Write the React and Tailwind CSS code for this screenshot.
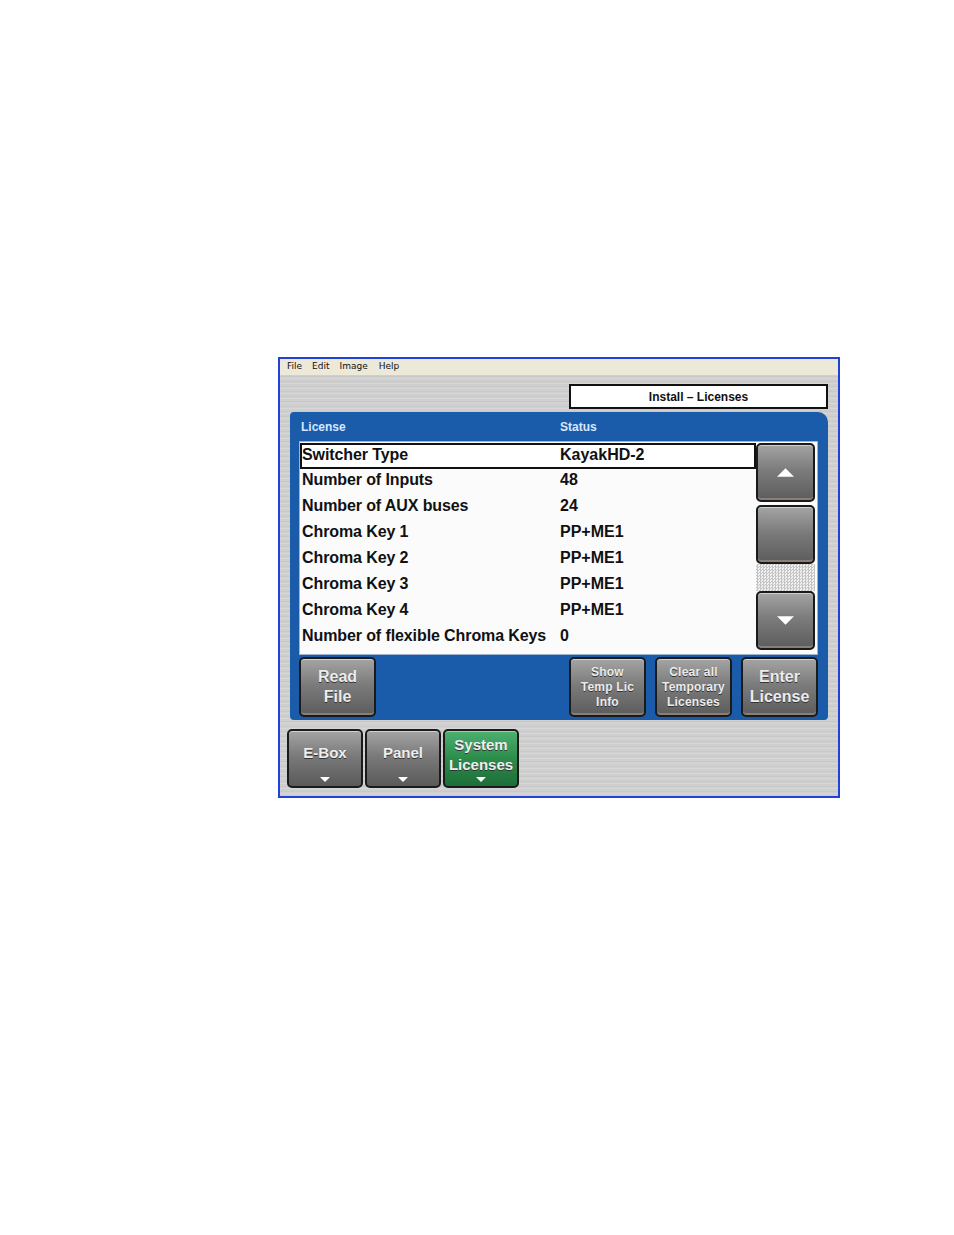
import React from "react";

const rows = [
  ["Switcher Type", "KayakHD-2"],
  ["Number of Inputs", "48"],
  ["Number of AUX buses", "24"],
  ["Chroma Key 1", "PP+ME1"],
  ["Chroma Key 2", "PP+ME1"],
  ["Chroma Key 3", "PP+ME1"],
  ["Chroma Key 4", "PP+ME1"],
  ["Number of flexible Chroma Keys", "0"],
];

const Tri = ({ down, className }) => (
  <svg viewBox="0 0 20 10" className={className}>
    <polygon points={down ? "0,0 20,0 10,10" : "10,0 20,10 0,10"} fill="#ffffff" />
  </svg>
);

const grayBtn =
  "rounded-[5px] border-2 border-[#1a1a1a] bg-[linear-gradient(180deg,#a4a4a4_0%,#7c7c7c_45%,#5c5c5c_100%)] shadow-[inset_0_1px_0_#d0d0d0,inset_0_-2px_0_#8a7f78]";

const PanelButton = ({ lines, small }) => (
  <div
    className={`${grayBtn} w-[77px] h-[60px] flex flex-col items-center justify-center text-[#ececec] font-bold [text-shadow:0_1px_0_#333] ${
      small ? "text-[12px] leading-[15px] tracking-[0.2px]" : "text-[16px] leading-[20px]"
    }`}
  >
    {lines.map((l) => (
      <span key={l} className="whitespace-nowrap">{l}</span>
    ))}
  </div>
);

const Tab = ({ lines, green }) => (
  <div
    className={`w-[76px] h-[59px] rounded-[5px] border-2 border-[#1a1a1a] flex flex-col items-center pt-[5px] text-[15px] leading-[20px] font-bold text-[#eeeeee] [text-shadow:0_1px_0_#333] ${
      green
        ? "bg-[linear-gradient(180deg,#4cb070_0%,#2c8c4c_50%,#1d6e38_100%)] shadow-[inset_0_1px_0_#90d8a8]"
        : "bg-[linear-gradient(180deg,#a4a4a4_0%,#7a7a7a_45%,#5a5a5a_100%)] shadow-[inset_0_1px_0_#d0d0d0]"
    }`}
  >
    <div className={`flex-1 flex flex-col justify-center ${lines.length > 1 ? "-mt-[4px]" : "pb-[8px]"}`}>
      {lines.map((l) => (
        <span key={l} className="text-center">{l}</span>
      ))}
    </div>
    <Tri down className="w-[10px] h-[5px] mb-[4px]" />
  </div>
);

const ScrollBtn = ({ children }) => (
  <div className={`${grayBtn} w-[59px] h-[59px] flex items-center justify-center`}>{children}</div>
);

export default function App() {
  return (
    <div className="w-[954px] h-[1235px] bg-white pt-[357px] pl-[278px] font-['Liberation_Sans',Arial,sans-serif]">
      <div className="w-[562px] h-[441px] border-2 border-[#2142d8] flex flex-col">
        <div className="h-[16px] bg-[#ece9d8] flex items-center text-[9px] text-[#111] font-['DejaVu_Sans',sans-serif]">
          <span className="ml-[7px]">File</span>
          <span className="ml-[10px]">Edit</span>
          <span className="ml-[10px]">Image</span>
          <span className="ml-[11px]">Help</span>
        </div>

        <div className="flex-1 flex flex-col bg-[repeating-linear-gradient(180deg,#d2d2d2_0px,#c6c6c6_2px,#dadada_3px,#cbcbcb_5px)]">
          <div className="mt-[9px] mr-[10px] ml-auto w-[259px] h-[25px] bg-white border-2 border-[#111] flex items-center justify-center text-[12px] font-bold text-[#111]">
            Install – Licenses
          </div>

          <div className="mt-[3px] ml-[10px] w-[538px] h-[308px] bg-[#1b5caa] rounded-[4px] rounded-tr-[10px] pl-[9px] flex flex-col">
            <div className="h-[29px] flex items-center text-[12px] font-bold text-[#d8e6ff]">
              <span className="ml-[2px] w-[259px]">License</span>
              <span>Status</span>
            </div>

            <div className="w-[519px] h-[214px] bg-[#fbfbfb] border border-[#9fb4d0] flex">
              <div className="w-[456px] pt-[1px] flex flex-col">
                {rows.map(([k, v], i) => (
                  <div
                    key={k}
                    className={`h-[26px] flex items-center pb-[3px] text-[16px] font-bold text-[#111] ${
                      i === 0 ? "border-2 border-[#111] bg-white -mb-[1px]" : "border-2 border-transparent"
                    }`}
                  >
                    <span className="w-[258px] whitespace-nowrap tracking-[-0.1px]">{k}</span>
                    <span>{v}</span>
                  </div>
                ))}
              </div>
              <div className="pt-[1px] flex flex-col">
                <ScrollBtn>
                  <Tri className="w-[17px] h-[9px]" />
                </ScrollBtn>
                <div className="mt-[3px]">
                  <ScrollBtn />
                </div>
                <div className="w-[59px] h-[27px] bg-[repeating-conic-gradient(#c4c4c4_0_25%,#f2f2f2_0_50%)] bg-[length:3px_3px]" />
                <ScrollBtn>
                  <Tri down className="w-[17px] h-[9px]" />
                </ScrollBtn>
              </div>
            </div>

            <div className="mt-[2px] flex items-center pr-[10px]">
              <PanelButton lines={["Read", "File"]} />
              <div className="ml-auto flex gap-[9px]">
                <PanelButton small lines={["Show", "Temp Lic", "Info"]} />
                <PanelButton small lines={["Clear all", "Temporary", "Licenses"]} />
                <PanelButton lines={["Enter", "License"]} />
              </div>
            </div>
          </div>

          <div className="mt-[9px] ml-[7px] flex gap-[2px]">
            <Tab lines={["E-Box"]} />
            <Tab lines={["Panel"]} />
            <Tab green lines={["System", "Licenses"]} />
          </div>
        </div>
      </div>
    </div>
  );
}
